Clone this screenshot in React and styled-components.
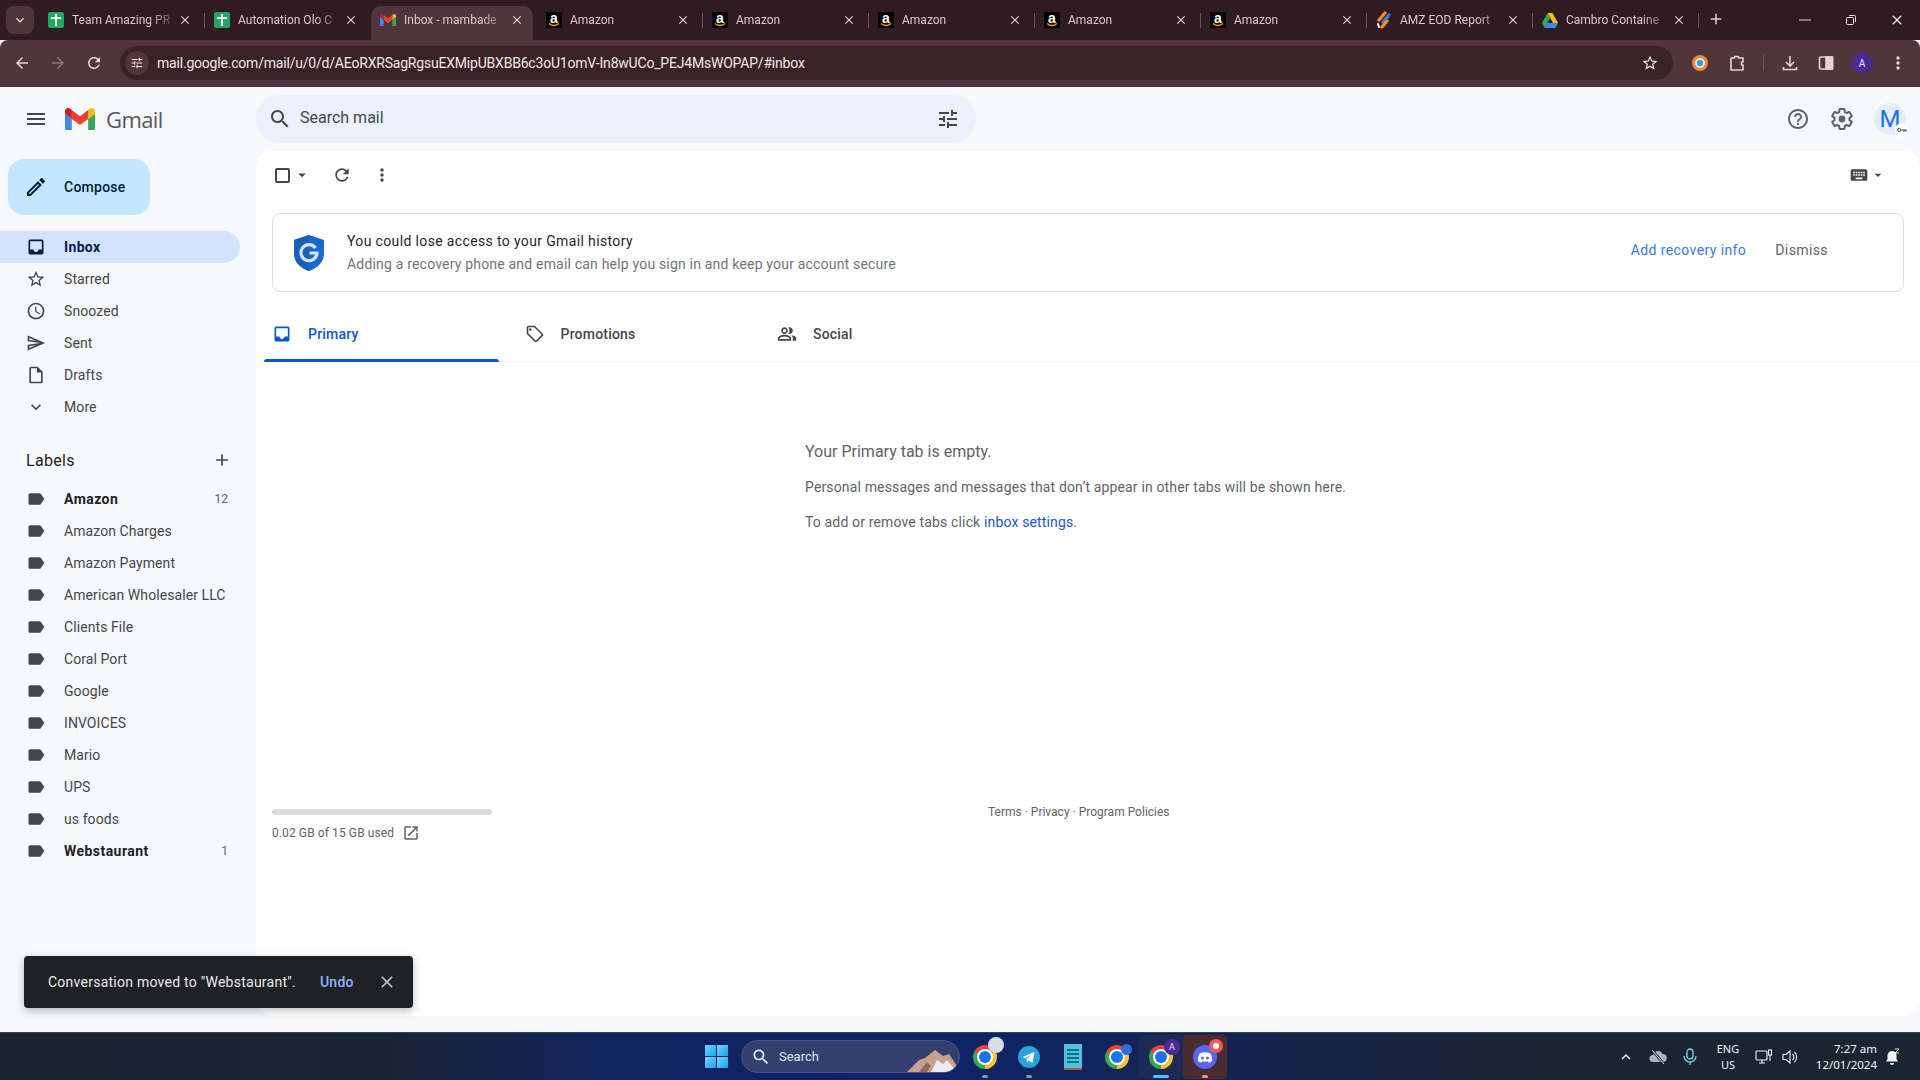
import React from "react";
import styled, { createGlobalStyle } from "styled-components";

const GlobalStyle = createGlobalStyle`
  html, body { margin: 0; padding: 0; }
  body { font-family: Roboto, "Liberation Sans", sans-serif; background: #f6f8fc; }
  * { box-sizing: border-box; }
`;

// material icon paths
const P = {
  menu: "M3 18h18v-2H3v2zm0-5h18v-2H3v2zm0-7v2h18V6H3z",
  search: "M15.5 14h-.79l-.28-.27C15.41 12.59 16 11.11 16 9.5 16 5.91 13.09 3 9.5 3S3 5.91 3 9.5 5.91 16 9.5 16c1.61 0 3.09-.59 4.23-1.57l.27.28v.79l5 4.99L20.49 19l-4.99-5zm-6 0C7.01 14 5 11.99 5 9.5S7.01 5 9.5 5 14 7.01 14 9.5 11.99 14 9.5 14z",
  tune: "M3 17v2h6v-2H3zM3 5v2h10V5H3zm10 16v-2h8v-2h-8v-2h-2v6h2zM7 9v2H3v2h4v2h2V9H7zm14 4v-2H11v2h10zm-6-4h2V7h4V5h-4V3h-2v6z",
  help: "M11 18h2v-2h-2v2zm1-16C6.48 2 2 6.48 2 12s4.48 10 10 10 10-4.48 10-10S17.52 2 12 2zm0 18c-4.41 0-8-3.59-8-8s3.59-8 8-8 8 3.59 8 8-3.59 8-8 8zm0-14c-2.21 0-4 1.79-4 4h2c0-1.1.9-2 2-2s2 .9 2 2c0 2-3 1.75-3 5h2c0-2.25 3-2.5 3-5 0-2.21-1.79-4-4-4z",
  star: "M22 9.24l-7.19-.62L12 2 9.19 8.63 2 9.24l5.46 4.73L5.82 21 12 17.27 18.18 21l-1.63-7.03L22 9.24zM12 15.4l-3.76 2.27 1-4.28-3.32-2.88 4.38-.38L12 6.1l1.71 4.04 4.38.38-3.32 2.88 1 4.28L12 15.4z",
  clock: "M11.99 2C6.47 2 2 6.48 2 12s4.47 10 9.99 10C17.52 22 22 17.52 22 12S17.52 2 11.99 2zM12 20c-4.42 0-8-3.58-8-8s3.58-8 8-8 8 3.58 8 8-3.58 8-8 8zm.5-13H11v6l5.25 3.15.75-1.23-4.5-2.67z",
  send: "M4.01 6.03l7.51 3.22-7.52-1 .01-2.22m7.5 8.72L4 17.97v-2.22l7.51-1M2.01 3L2 10l15 2-15 2 .01 7L23 12 2.01 3z",
  draft: "M14 2H6c-1.1 0-1.99.9-1.99 2L4 20c0 1.1.89 2 1.99 2H18c1.1 0 2-.9 2-2V8l-6-6zM6 20V4h7v5h5v11H6z",
  more: "M16.59 8.59L12 13.17 7.41 8.59 6 10l6 6 6-6z",
  inbox: "M19 3H4.99c-1.11 0-1.98.89-1.98 2L3 19c0 1.1.88 2 1.99 2H19c1.1 0 2-.9 2-2V5c0-1.11-.9-2-2-2zm0 12h-4c0 1.66-1.35 3-3 3s-3-1.34-3-3H4.99V5H19v10z",
  label: "M17.63 5.84C17.27 5.33 16.67 5 16 5L5 5.01C3.9 5.01 3 5.9 3 7v10c0 1.1.9 1.99 2 1.99L16 19c.67 0 1.27-.33 1.63-.84L22 12l-4.37-6.16z",
  add: "M19 13h-6v6h-2v-6H5v-2h6V5h2v6h6v2z",
  refresh: "M17.65 6.35C16.2 4.9 14.21 4 12 4c-4.42 0-7.99 3.58-7.99 8s3.57 8 7.99 8c3.73 0 6.84-2.55 7.73-6h-2.08c-.82 2.33-3.04 4-5.65 4-3.31 0-6-2.69-6-6s2.69-6 6-6c1.66 0 3.14.69 4.22 1.78L13 11h7V4l-2.35 2.35z",
  dots: "M12 8c1.1 0 2-.9 2-2s-.9-2-2-2-2 .9-2 2 .9 2 2 2zm0 2c-1.1 0-2 .9-2 2s.9 2 2 2 2-.9 2-2-.9-2-2-2zm0 6c-1.1 0-2 .9-2 2s.9 2 2 2 2-.9 2-2-.9-2-2-2z",
  arrow: "M7 10l5 5 5-5z",
  tag: "M21.41 11.58l-9-9C12.05 2.22 11.55 2 11 2H4c-1.1 0-2 .9-2 2v7c0 .55.22 1.05.59 1.42l9 9c.36.36.86.58 1.41.58s1.05-.22 1.41-.59l7-7c.37-.36.59-.86.59-1.41s-.23-1.06-.59-1.42zM13 20.01L4 11V4h7v-.01l9 8.99-7 7.03zM6.5 5A1.5 1.5 0 1 0 6.5 8 1.5 1.5 0 1 0 6.5 5z",
  people: "M16.67 13.13C18.04 14.06 19 15.32 19 17v3h4v-3c0-2.18-3.57-3.47-6.33-3.87zM15 12c2.21 0 4-1.79 4-4s-1.79-4-4-4c-.47 0-.91.1-1.33.24C14.5 5.27 15 6.58 15 8s-.5 2.73-1.33 3.76c.42.14.86.24 1.33.24zM9 12c2.21 0 4-1.79 4-4s-1.79-4-4-4-4 1.79-4 4 1.79 4 4 4zm0-6c1.1 0 2 .9 2 2s-.9 2-2 2-2-.9-2-2 .9-2 2-2zm0 7c-2.67 0-8 1.34-8 4v3h16v-3c0-2.66-5.33-4-8-4zm6 5H3v-.99C3.2 16.29 6.3 15 9 15s5.8 1.29 6 2v1z",
  open: "M19 19H5V5h7V3H5c-1.11 0-2 .9-2 2v14c0 1.1.89 2 2 2h14c1.1 0 2-.9 2-2v-7h-2v7zM14 3v2h3.59l-9.83 9.83 1.41 1.41L19 6.41V10h2V3h-7z",
  close: "M19 6.41L17.59 5 12 10.59 6.41 5 5 6.41 10.59 12 5 17.59 6.41 19 12 13.41 17.59 19 19 17.59 13.41 12z",
  edit: "M3 17.25V21h3.75L17.81 9.94l-3.75-3.75L3 17.25zM5.92 19H5v-.92l9.06-9.06.92.92L5.92 19zM20.71 5.63l-2.34-2.34c-.39-.39-1.02-.39-1.41 0l-1.83 1.83 3.75 3.75 1.83-1.83c.39-.39.39-1.02 0-1.41z",
  keyboard: "M20 5H4c-1.1 0-1.99.9-1.99 2L2 17c0 1.1.9 2 2 2h16c1.1 0 2-.9 2-2V7c0-1.1-.9-2-2-2zm-9 3h2v2h-2V8zm0 3h2v2h-2v-2zM8 8h2v2H8V8zm0 3h2v2H8v-2zm-1 2H5v-2h2v2zm0-3H5V8h2v2zm9 7H8v-2h8v2zm0-4h-2v-2h2v2zm0-3h-2V8h2v2zm3 3h-2v-2h2v2zm0-3h-2V8h2v2z",
  back: "M20 11H7.83l5.59-5.59L12 4l-8 8 8 8 1.41-1.41L7.83 13H20v-2z",
  forward: "M12 4l-1.41 1.41L16.17 11H4v2h12.17l-5.58 5.59L12 20l8-8z",
  plain: "M3 11.300h18v1.400H3z",
  gear: "M19.43 12.98c.04-.32.07-.64.07-.98s-.03-.66-.07-.98l2.11-1.65c.19-.15.24-.42.12-.64l-2-3.46c-.12-.22-.39-.3-.61-.22l-2.49 1c-.52-.4-1.08-.73-1.69-.98l-.38-2.65C14.46 2.18 14.25 2 14 2h-4c-.25 0-.46.18-.49.42l-.38 2.65c-.61.25-1.17.59-1.69.98l-2.49-1c-.23-.09-.49 0-.61.22l-2 3.46c-.13.22-.07.49.12.64l2.11 1.65c-.04.32-.07.65-.07.98s.03.66.07.98l-2.11 1.65c-.19.15-.24.42-.12.64l2 3.46c.12.22.39.3.61.22l2.49-1c.52.4 1.08.73 1.69.98l.38 2.65c.03.24.24.42.49.42h4c.25 0 .46-.18.49-.42l.38-2.65c.61-.25 1.17-.59 1.69-.98l2.49 1c.23.09.49 0 .61-.22l2-3.46c.12-.22.07-.49-.12-.64l-2.11-1.65z",
};

const chromeTint = "#e8d0d6";

const Icon = ({ d, size = 20, color = "#444746", className }) => (
  <svg className={className} width={size} height={size} viewBox="0 0 24 24" fill={color} style={{ flex: "none" }}>
    <path d={d} />
  </svg>
);

const Page = styled.div`
  position: relative;
  width: 1920px;
  height: 1080px;
  overflow: hidden;
  display: flex;
  flex-direction: column;
  background: #f6f8fc;
`;

/* ---- browser chrome ---- */
const TabStrip = styled.div`
  height: 40px;
  background: #2f1b21;
  display: flex;
  align-items: flex-end;
  padding-left: 6px;
  color: #dcc8ce;
`;
const TabSearch = styled.div`
  width: 28px;
  height: 28px;
  margin: 0 5px 6px 0;
  border-radius: 8px;
  background: #50363c;
  display: flex;
  align-items: center;
  justify-content: center;
`;
const Tab = styled.div`
  position: relative;
  width: ${(p) => (p.$active ? "162px" : "166px")};
  margin-right: ${(p) => (p.$active ? "4px" : "0")};
  height: 34px;
  padding: 0 ${(p) => (p.$active ? "9px" : "13px")} 6px 9px;
  display: flex;
  align-items: center;
  gap: 8px;
  border-radius: 10px 10px 0 0;
  background: ${(p) => (p.$active ? "#50363c" : "transparent")};
  font-size: 12px;
  &::after {
    content: "";
    display: ${(p) => (p.$sep ? "block" : "none")};
    position: absolute;
    right: 0;
    top: 7px;
    height: 15px;
    width: 1px;
    background: #6a535a;
  }
`;
const TabTitle = styled.span`
  flex: 1;
  white-space: nowrap;
  overflow: hidden;
  -webkit-mask-image: linear-gradient(90deg, #000 78%, rgba(0, 0, 0, 0.35) 100%);
  mask-image: linear-gradient(90deg, #000 78%, rgba(0, 0, 0, 0.35) 100%);
`;
const Favicon = styled.span`
  flex: none;
  width: 16px;
  height: 16px;
  display: flex;
  align-items: center;
  justify-content: center;
`;
const SheetIcon = styled(Favicon)`
  background: #23a566;
  border-radius: 2px;
  &::before {
    content: "";
    width: 10px;
    height: 12px;
    background:
      linear-gradient(#fff, #fff) 0 3px / 10px 2px no-repeat,
      linear-gradient(#fff, #fff) 4px 0 / 2px 12px no-repeat;
  }
`;
const AmazonIcon = styled(Favicon)`
  position: relative;
  background: #000;
  color: #fff;
  font: 700 14px/12px "Liberation Sans", sans-serif;
  align-items: flex-start;
  svg { position: absolute; left: 2px; bottom: 1px; }
`;
const NewTab = styled.div`
  margin: 0 0 12px 8px;
  display: flex;
`;
const WindowControls = styled.div`
  margin-left: auto;
  display: flex;
  margin-bottom: 12px;
  padding-right: 15px;
  gap: 30px;
`;
const Toolbar = styled.div`
  height: 47px;
  background: #50363c;
  border-radius: 8px 8px 0 0;
  padding: 6px 4px 7px 12px;
  display: flex;
  align-items: center;
`;
const NavButton = styled.div`
  width: 36px;
  display: flex;
  justify-content: center;
  align-items: center;
  &:first-child { margin-left: -8px; }
`;
const AddressBar = styled.div`
  width: 1553px;
  height: 34px;
  margin-left: 8px;
  border-radius: 17px;
  background: #3a2227;
  display: flex;
  align-items: center;
  padding: 0 14px 0 5px;
  color: #f2e6e8;
  font-size: 14px;
  letter-spacing: -0.2px;
`;
const SiteInfo = styled.div`
  width: 24px;
  height: 24px;
  border-radius: 50%;
  background: #50363c;
  display: flex;
  align-items: center;
  justify-content: center;
  margin-right: 8px;
`;
const Url = styled.span`
  flex: 1;
  white-space: nowrap;
`;
const ToolSlot = styled.div`
  width: ${(p) => p.$w || 36}px;
  display: flex;
  justify-content: center;
  align-items: center;
  position: relative;
`;
const ToolDivider = styled.span`
  width: 1px;
  height: 16px;
  background: #6a535a;
  margin: 0 8px 0 16px;
`;
const ProfileDot = styled.span`
  width: 20px;
  height: 20px;
  border-radius: 50%;
  background: #4b2a9a;
  color: #f0e8ff;
  font-size: 10px;
  display: flex;
  align-items: center;
  justify-content: center;
`;
const ExtIcon = styled.span`
  width: 16px;
  height: 16px;
  border-radius: 50%;
  background: radial-gradient(circle, #27a7e7 0 3px, #f6e2cf 3.5px 4.5px, #e8873a 5.5px);
`;

/* ---- gmail ---- */
const MailHeader = styled.header`
  height: 64px;
  display: flex;
  align-items: center;
`;
const Brand = styled.div`
  width: 256px;
  display: flex;
  align-items: center;
  padding-left: 24px;
`;
const BrandGap = styled.span`
  width: 17px;
`;
const BrandName = styled.span`
  margin-left: 11px;
  font: 400 22px/1 "Open Sans", Roboto, sans-serif;
  letter-spacing: -0.6px;
  color: #55585c;
`;
const SearchBox = styled.div`
  width: 720px;
  height: 48px;
  border-radius: 24px;
  background: #eaf1fb;
  display: flex;
  align-items: center;
  padding: 0 16px 0 12px;
  color: #444746;
  font-size: 16px;
`;
const SearchText = styled.span`
  flex: 1;
  margin: -3px 0 0 8px;
`;
const HeaderActions = styled.div`
  margin-left: auto;
  display: flex;
  align-items: center;
  padding-right: 14px;
`;
const HeaderButton = styled.div`
  width: 44px;
  display: flex;
  justify-content: center;
`;
const Avatar = styled.div`
  position: relative;
  width: 32px;
  height: 32px;
  margin-left: 10px;
  border-radius: 50%;
  background: #e3edfb;
  color: #1a73e8;
  font-size: 24px;
  display: flex;
  align-items: center;
  justify-content: center;
`;
const KeyBadge = styled.span`
  position: absolute;
  right: -3px;
  bottom: -2px;
  width: 14px;
  height: 14px;
  border-radius: 50%;
  background: #fff;
  display: flex;
  align-items: center;
  justify-content: center;
`;
const MailBody = styled.div`
  flex: 1;
  display: flex;
  min-height: 0;
`;
const Sidebar = styled.aside`
  width: 256px;
  flex: none;
`;
const Compose = styled.div`
  width: 142px;
  height: 56px;
  margin: 8px 0 16px 8px;
  padding-left: 16px;
  border-radius: 16px;
  background: #c2e7ff;
  display: flex;
  align-items: center;
  gap: 16px;
  font-size: 14px;
  font-weight: 500;
  letter-spacing: 0.25px;
  color: #001d35;
`;
const NavRow = styled.div`
  width: 240px;
  height: 32px;
  padding: 0 0 0 26px;
  border-radius: 0 16px 16px 0;
  display: flex;
  align-items: center;
  gap: 18px;
  font-size: 14px;
  letter-spacing: ${(p) => (p.$active ? "0.35px" : "0.1px")};
  background: ${(p) => (p.$active ? "#d3e3fd" : "transparent")};
  color: ${(p) => (p.$active ? "#041e49" : "#444746")};
  font-weight: ${(p) => (p.$active ? 700 : 400)};
`;
const LabelsHead = styled.div`
  height: 60px;
  padding: 14px 24px 0 26px;
  display: flex;
  align-items: center;
  justify-content: space-between;
  font-size: 16px;
  font-weight: 400;
  letter-spacing: 0.3px;
  color: #1f1f1f;
`;
const LabelRow = styled(NavRow)`
  padding-right: 12px;
  letter-spacing: ${(p) => (p.$bold ? "0.45px" : "0.08px")};
  color: ${(p) => (p.$bold ? "#202124" : "#444746")};
  font-weight: ${(p) => (p.$bold ? 700 : 400)};
`;
const LabelCount = styled.span`
  margin-left: auto;
  font-size: 12px;
  font-weight: 400;
  letter-spacing: 0;
  color: #5f6368;
`;
const Panel = styled.main`
  flex: 1;
  margin-bottom: 16px;
  border-radius: 16px;
  background: #fff;
  display: flex;
  flex-direction: column;
`;
const ListBar = styled.div`
  height: 48px;
  padding: 0 34px 0 19px;
  display: flex;
  align-items: center;
`;
const Checkbox = styled.span`
  width: 15px;
  height: 15px;
  border: 2px solid #444746;
  border-radius: 2px;
`;
const BarIcon = styled.span`
  display: flex;
  margin-left: ${(p) => p.$gap || 0}px;
`;
const InputTools = styled.div`
  margin-left: auto;
  display: flex;
  align-items: center;
  gap: 1px;
`;
const Notice = styled.div`
  height: 79px;
  margin: 14px 16px 0;
  border: 1px solid #dadce0;
  border-radius: 8px;
  padding: 0 75px 0 21px;
  display: flex;
  align-items: center;
  font-size: 14px;
`;
const NoticeText = styled.div`
  margin-left: 23px;
  line-height: 23px;
`;
const NoticeTitle = styled.div`
  color: #1f1f1f;
  font-weight: 400;
  letter-spacing: 0.36px;
`;
const NoticeSub = styled.div`
  color: #70757a;
  letter-spacing: 0.19px;
`;
const NoticeActions = styled.div`
  margin-left: auto;
  margin-top: -5px;
  display: flex;
  gap: 29px;
  letter-spacing: 0.4px;
`;
const RecoveryLink = styled.span`
  color: #3b78e7;
`;
const Dismiss = styled.span`
  color: #5f6368;
`;
const TabsRow = styled.div`
  height: 56px;
  margin-top: 14px;
  padding-left: 8px;
  border-bottom: 1px solid #f1f3f4;
  display: flex;
`;
const MailTab = styled.div`
  position: relative;
  width: 252.5px;
  padding-left: 8px;
  display: flex;
  align-items: center;
  gap: 16px;
  font-size: 14px;
  font-weight: 500;
  letter-spacing: 0.2px;
  color: ${(p) => (p.$active ? "#0b57d0" : "#444746")};
  &::after {
    content: "";
    display: ${(p) => (p.$active ? "block" : "none")};
    position: absolute;
    left: 0;
    bottom: -1px;
    width: 235px;
    height: 3px;
    border-radius: 3px 3px 0 0;
    background: #0b57d0;
  }
`;
const Empty = styled.section`
  padding: 78px 0 0 549px;
  color: #5f6368;
  font-size: 14px;
`;
const EmptyTitle = styled.div`
  font-size: 16px;
  line-height: 24px;
  margin-bottom: 11px;
`;
const EmptyLine = styled.div`
  line-height: 24px;
  margin-bottom: 11px;
  letter-spacing: 0.15px;
`;
const EmptyLink = styled.span`
  color: #1a56c4;
`;
const MailFooter = styled.footer`
  margin-top: 264px;
  padding-left: 16px;
  display: flex;
  font-size: 12px;
  color: #5f6368;
`;
const Storage = styled.div`
  width: 220px;
`;
const StorageBar = styled.div`
  height: 6px;
  border-radius: 3px;
  background: #dadce0;
`;
const StorageText = styled.div`
  margin-top: 9px;
  display: flex;
  align-items: center;
  gap: 8px;
  letter-spacing: 0.1px;
`;
const Terms = styled.div`
  margin-left: 496px;
  margin-top: -4px;
  line-height: 14px;
`;
const Toast = styled.div`
  position: absolute;
  left: 24px;
  bottom: 72px;
  width: 389px;
  height: 52px;
  padding: 0 16px 0 24px;
  border-radius: 4px;
  background: #202124;
  box-shadow: 0 3px 8px rgba(60, 64, 67, 0.35);
  color: #e8eaed;
  font-size: 14px;
  letter-spacing: 0.25px;
  display: flex;
  align-items: center;
`;
const ToastUndo = styled.span`
  margin-left: 24px;
  color: #8ab4f8;
  font-weight: 500;
`;
const ToastClose = styled.span`
  margin-left: auto;
  display: flex;
`;

/* ---- taskbar ---- */
const Taskbar = styled.div`
  height: 48px;
  border-top: 1px solid #3d434f;
  background: linear-gradient(90deg, #1b2330 0%, #1a2335 20%, #10235e 32%, #0f2468 50%, #14234d 66%, #1b2431 80%, #1b2431 100%);
  display: flex;
  align-items: center;
  padding-left: 705px;
  color: #f2f4f7;
`;
const WinLogo = styled.div`
  width: 23px;
  height: 23px;
  display: grid;
  grid-template-columns: 1fr 1fr;
  gap: 1px;
  span { background: linear-gradient(135deg, #6fd7fb, #1aa2ea); }
`;
const TaskSearch = styled.div`
  position: relative;
  width: 219px;
  height: 33px;
  margin-left: 13px;
  border-radius: 17px;
  border: 1px solid #4a5684;
  background: #33406f;
  display: flex;
  align-items: center;
  padding-left: 9px;
  gap: 8px;
  font-size: 13px;
  color: #dfe3ee;
  overflow: hidden;
  svg.peaks { position: absolute; right: 2px; bottom: 0; }
`;
const TaskSlot = styled.div`
  position: relative;
  width: 44px;
  height: 44px;
  margin-left: ${(p) => (p.$first ? "3px" : "0")};
  display: flex;
  align-items: center;
  justify-content: center;
  border-radius: 4px;
  background: ${(p) => p.$bg || "transparent"};
  &::after {
    content: "";
    display: ${(p) => (p.$mark ? "block" : "none")};
    position: absolute;
    left: 50%;
    bottom: 1px;
    transform: translateX(-50%);
    width: ${(p) => (p.$wide ? "16px" : "6px")};
    height: 3px;
    border-radius: 2px;
    background: ${(p) => p.$mark};
  }
`;
const ChromeIcon = styled.span`
  position: relative;
  width: 24px;
  height: 24px;
  border-radius: 50%;
  background: conic-gradient(from -62deg, #ea4335 0 124deg, #fbc02d 124deg 240deg, #34a853 240deg 360deg);
  &::after {
    content: "";
    position: absolute;
    inset: 6px;
    border-radius: 50%;
    background: #1a73e8;
    box-shadow: 0 0 0 2px #fff;
  }
`;
const AppBadge = styled.span`
  position: absolute;
  top: ${(p) => p.$top ?? 2}px;
  right: ${(p) => p.$right ?? 6}px;
  width: ${(p) => p.$size || 15}px;
  height: ${(p) => p.$size || 15}px;
  border-radius: 50%;
  background: ${(p) => p.$bg};
  color: #e8e0ff;
  font-size: 9px;
  display: flex;
  align-items: center;
  justify-content: center;
`;
const Tray = styled.div`
  margin-left: auto;
  height: 100%;
  padding-right: 13px;
  display: flex;
  align-items: center;
`;
const TraySlot = styled.div`
  width: ${(p) => p.$w}px;
  display: flex;
  justify-content: center;
  align-items: center;
`;
const TrayText = styled.div`
  width: ${(p) => p.$w}px;
  text-align: ${(p) => p.$align || "center"};
  font-family: "Noto Sans", "Open Sans", sans-serif;
  font-size: ${(p) => p.$size || 11}px;
  line-height: 16px;
  white-space: nowrap;
`;

const Sheet = () => <SheetIcon />;
const Amazon = () => (
  <AmazonIcon>
    a
    <svg width="12" height="4" viewBox="0 0 12 4"><path d="M1 0.5c3 2.5 7 2.5 10 0" stroke="#f90" strokeWidth="1.4" fill="none" /></svg>
  </AmazonIcon>
);
const GmailMark = ({ w = 16, h = 12 }) => (
  <svg width={w} height={h} viewBox="52 42 88 66" style={{ flex: "none" }}>
    <path fill="#4285f4" d="M58 108h14V74L52 59v43c0 3.32 2.69 6 6 6" />
    <path fill="#34a853" d="M120 108h14c3.32 0 6-2.69 6-6V59l-20 15" />
    <path fill="#fbbc04" d="M120 48v26l20-15v-8c0-7.42-8.47-11.65-14.4-7.2" />
    <path fill="#ea4335" d="M72 74V48l24 18 24-18v26L96 92" />
    <path fill="#c5221f" d="M52 51v8l20 15V48l-5.6-4.2c-5.94-4.45-14.4-.22-14.4 7.2" />
  </svg>
);
const Amz = () => (
  <svg width="16" height="18" viewBox="0 0 16 18" style={{ flex: "none" }}>
    <path d="M9 2L3 9" stroke="#f28b20" strokeWidth="3.4" strokeLinecap="round" />
    <path d="M13 4L7 11" stroke="#2a7de1" strokeWidth="3.4" strokeLinecap="round" />
    <path d="M11 10L6 16" stroke="#f28b20" strokeWidth="3.4" strokeLinecap="round" />
    <path d="M2 13L3 16" stroke="#fff" strokeWidth="2" strokeLinecap="round" />
  </svg>
);
const Drive = () => (
  <svg width="16" height="15" viewBox="0 0 16 15" style={{ flex: "none" }}>
    <path d="M5.5 0h5L16 10h-5z" fill="#fbbc04" />
    <path d="M5.5 0L0 10l2.5 5L8 5z" fill="#34a853" />
    <path d="M2.5 15h11l2.5-5H5z" fill="#4285f4" />
  </svg>
);

const tabs = [
  { title: "Team Amazing PR", icon: <Sheet />, sep: true },
  { title: "Automation Olo C", icon: <Sheet /> },
  { title: "Inbox - mambade", icon: <GmailMark />, active: true },
  { title: "Amazon", icon: <Amazon />, sep: true },
  { title: "Amazon", icon: <Amazon />, sep: true },
  { title: "Amazon", icon: <Amazon />, sep: true },
  { title: "Amazon", icon: <Amazon />, sep: true },
  { title: "Amazon", icon: <Amazon />, sep: true },
  { title: "AMZ EOD Report", icon: <Amz />, sep: true },
  { title: "Cambro Containe", icon: <Drive />, sep: true },
];

const mainNav = [
  { text: "Inbox", d: P.inbox, active: true },
  { text: "Starred", d: P.star },
  { text: "Snoozed", d: P.clock },
  { text: "Sent", d: P.send },
  { text: "Drafts", d: P.draft },
  { text: "More", d: P.more },
];

const labels = [
  { text: "Amazon", count: 12, bold: true },
  { text: "Amazon Charges" },
  { text: "Amazon Payment" },
  { text: "American Wholesaler LLC" },
  { text: "Clients File" },
  { text: "Coral Port" },
  { text: "Google" },
  { text: "INVOICES" },
  { text: "Mario" },
  { text: "UPS" },
  { text: "us foods" },
  { text: "Webstaurant", count: 1, bold: true },
];

const BrowserChrome = () => (
  <>
    <TabStrip>
      <TabSearch><Icon d={P.more} size={16} color={chromeTint} /></TabSearch>
      {tabs.map((t, i) => (
        <Tab key={i} $active={t.active} $sep={t.sep}>
          {t.icon}
          <TabTitle>{t.title}</TabTitle>
          <Icon d={P.close} size={14} color={chromeTint} />
        </Tab>
      ))}
      <NewTab><Icon d={P.add} size={18} color={chromeTint} /></NewTab>
      <WindowControls>
        <Icon d={P.plain} size={16} color="#f0e4e6" />
        <svg width="16" height="16" viewBox="0 0 16 16" fill="none" stroke="#f0e4e6" strokeWidth="1">
          <rect x="3.5" y="5.5" width="7" height="7" rx="1" />
          <path d="M6 3.5h5.5a1 1 0 0 1 1 1V10" />
        </svg>
        <Icon d={P.close} size={16} color="#f0e4e6" />
      </WindowControls>
    </TabStrip>
    <Toolbar>
      <NavButton><Icon d={P.back} size={18} color={chromeTint} /></NavButton>
      <NavButton><Icon d={P.forward} size={18} color="#8a747a" /></NavButton>
      <NavButton><Icon d={P.refresh} size={18} color={chromeTint} /></NavButton>
      <AddressBar>
        <SiteInfo><Icon d={P.tune} size={14} color="#f2e6e8" /></SiteInfo>
        <Url>mail.google.com/mail/u/0/d/AEoRXRSagRgsuEXMipUBXBB6c3oU1omV-In8wUCo_PEJ4MsWOPAP/#inbox</Url>
        <Icon d={P.star} size={18} color="#f2e6e8" />
      </AddressBar>
      <ToolSlot $w={54}><ExtIcon /></ToolSlot>
      <ToolSlot $w={20}>
        <svg width="18" height="18" viewBox="0 0 18 18" fill="none" stroke={chromeTint} strokeWidth="1.6">
          <path d="M3 4h3.500V2.500h4V4H15v4h-1.500v3H15v5H3z" strokeLinejoin="round" />
        </svg>
      </ToolSlot>
      <ToolDivider />
      <ToolSlot $w={36}>
        <svg width="18" height="18" viewBox="0 0 18 18" fill="none" stroke={chromeTint} strokeWidth="1.6">
          <path d="M9 2v10M5 8l4 4 4-4M2.500 13v2.500h13V13" />
        </svg>
      </ToolSlot>
      <ToolSlot $w={36}>
        <svg width="18" height="18" viewBox="0 0 18 18" fill="none" stroke={chromeTint} strokeWidth="1.6">
          <rect x="2.500" y="3" width="13" height="12" rx="1" />
          <rect x="9" y="3" width="6.500" height="12" fill={chromeTint} />
        </svg>
      </ToolSlot>
      <ToolSlot $w={36}><ProfileDot>A</ProfileDot></ToolSlot>
      <ToolSlot $w={36}><Icon d={P.dots} size={20} color={chromeTint} /></ToolSlot>
    </Toolbar>
  </>
);

const Header = () => (
  <MailHeader>
    <Brand>
      <Icon d={P.menu} size={24} color="#444746" />
      <BrandGap />
      <GmailMark w={30} h={22.5} />
      <BrandName>Gmail</BrandName>
    </Brand>
    <SearchBox>
      <Icon d={P.search} size={24} color="#444746" />
      <SearchText>Search mail</SearchText>
      <Icon d={P.tune} size={24} color="#444746" />
    </SearchBox>
    <HeaderActions>
      <HeaderButton><Icon d={P.help} size={24} color="#5f6368" /></HeaderButton>
      <HeaderButton>
        <svg width="24" height="24" viewBox="0 0 24 24">
          <path d={P.gear} fill="none" stroke="#5f6368" strokeWidth="2" />
          <circle cx="12" cy="12" r="3.4" fill="#5f6368" />
        </svg>
      </HeaderButton>
      <Avatar>
        M
        <KeyBadge>
          <svg width="10" height="6" viewBox="0 0 10 6" fill="none" stroke="#444" strokeWidth="1">
            <circle cx="2.2" cy="3" r="1.6" />
            <path d="M4 3h5.5M7 3v2M9 3v1.6" />
          </svg>
        </KeyBadge>
      </Avatar>
    </HeaderActions>
  </MailHeader>
);

const Side = () => (
  <Sidebar>
    <Compose>
      <Icon d={P.edit} size={24} color="#001d35" />
      Compose
    </Compose>
    {mainNav.map((n) => (
      <NavRow key={n.text} $active={n.active}>
        <Icon d={n.d} size={20} color={n.active ? "#041e49" : "#444746"} />
        {n.text}
      </NavRow>
    ))}
    <LabelsHead>
      Labels
      <Icon d={P.add} size={20} color="#444746" />
    </LabelsHead>
    {labels.map((l) => (
      <LabelRow key={l.text} $bold={l.bold}>
        <Icon d={P.label} size={20} color="#444746" />
        {l.text}
        {l.count && <LabelCount>{l.count}</LabelCount>}
      </LabelRow>
    ))}
  </Sidebar>
);

const Shield = () => (
  <svg width="30" height="36" viewBox="0 0 30 36" style={{ flex: "none" }}>
    <path d="M15 0l15 5v13c0 8.5-6 15-15 18C6 33 0 26.500 0 18V5z" fill="#1967d2" />
    <path d="M15 0L0 5v13c0 8.500 6 15 15 18z" fill="#1a5fb8" />
    <path d="M21.500 13a8 8 0 1 0 1.500 5h-7.500" fill="none" stroke="#d2e3fc" strokeWidth="3.200" />
  </svg>
);

const Content = () => (
  <Panel>
    <ListBar>
      <Checkbox />
      <BarIcon $gap={3}><Icon d={P.arrow} size={18} color="#444746" /></BarIcon>
      <BarIcon $gap={21}><Icon d={P.refresh} size={20} color="#444746" /></BarIcon>
      <BarIcon $gap={20}><Icon d={P.dots} size={20} color="#444746" /></BarIcon>
      <InputTools>
        <Icon d={P.keyboard} size={20} color="#444746" />
        <Icon d={P.arrow} size={16} color="#444746" />
      </InputTools>
    </ListBar>
    <Notice>
      <Shield />
      <NoticeText>
        <NoticeTitle>You could lose access to your Gmail history</NoticeTitle>
        <NoticeSub>Adding a recovery phone and email can help you sign in and keep your account secure</NoticeSub>
      </NoticeText>
      <NoticeActions>
        <RecoveryLink>Add recovery info</RecoveryLink>
        <Dismiss>Dismiss</Dismiss>
      </NoticeActions>
    </Notice>
    <TabsRow>
      <MailTab $active>
        <Icon d={P.inbox} size={20} color="#0b57d0" />
        Primary
      </MailTab>
      <MailTab>
        <Icon d={P.tag} size={20} color="#444746" />
        Promotions
      </MailTab>
      <MailTab>
        <Icon d={P.people} size={20} color="#444746" />
        Social
      </MailTab>
    </TabsRow>
    <Empty>
      <EmptyTitle>Your Primary tab is empty.</EmptyTitle>
      <EmptyLine>Personal messages and messages that don’t appear in other tabs will be shown here.</EmptyLine>
      <EmptyLine>To add or remove tabs click <EmptyLink>inbox settings</EmptyLink>.</EmptyLine>
    </Empty>
    <MailFooter>
      <Storage>
        <StorageBar />
        <StorageText>
          0.02 GB of 15 GB used
          <Icon d={P.open} size={18} color="#5f6368" />
        </StorageText>
      </Storage>
      <Terms>Terms · Privacy · Program Policies</Terms>
    </MailFooter>
  </Panel>
);

const WindowsTaskbar = () => (
  <Taskbar>
    <WinLogo><span /><span /><span /><span /></WinLogo>
    <TaskSearch>
      <Icon d={P.search} size={20} color="#e6e9f2" />
      Search
      <svg className="peaks" width="50" height="24" viewBox="0 0 50 24">
        <path d="M0 24L12 12l6-2L28 2l8 6 6-2 8 12v6z" fill="#c9a090" />
        <path d="M24 24l6-12 6 4 4-4 10 12z" fill="#e8ecf4" />
        <path d="M12 24l8-10 4 4-4 6z" fill="#8d6a60" />
      </svg>
    </TaskSearch>
    <TaskSlot $first $mark="#8c93a3">
      <ChromeIcon />
      <AppBadge $bg="#d8dde4" $top={2} $right={3} $size={16} />
    </TaskSlot>
    <TaskSlot $mark="#8c93a3">
      <svg width="22" height="22" viewBox="0 0 22 22">
        <circle cx="11" cy="11" r="11" fill="#2aa3dc" />
        <path d="M4.500 11l12-5-2 11-3.500-2.500-2 2-.5-3.500 5-4.500-6.500 4z" fill="#fff" />
      </svg>
    </TaskSlot>
    <TaskSlot>
      <svg width="18" height="26" viewBox="0 0 18 26">
        <rect width="18" height="26" fill="#4fc3d9" />
        <rect y="24" width="18" height="2" fill="#a5622f" />
        <path d="M3 6h12M3 10h12M3 14h12M3 18h12" stroke="#0b6d8c" strokeWidth="1.800" />
      </svg>
    </TaskSlot>
    <TaskSlot>
      <ChromeIcon />
      <AppBadge $bg="#2f6fdc" $top={9} $right={7} $size={11} />
    </TaskSlot>
    <TaskSlot $bg="#1d2a56" $mark="#4cc2ff" $wide>
      <ChromeIcon />
      <AppBadge $bg="#4b2a9a" $top={4} $right={3} $size={16}>A</AppBadge>
    </TaskSlot>
    <TaskSlot $bg="#4a2b2e" $mark="#ff8a8a">
      <svg width="24" height="24" viewBox="0 0 24 24">
        <circle cx="12" cy="12" r="12" fill="#5865f2" />
        <path d="M6.500 8.500c3.500-1.700 7.500-1.700 11 0 1.300 2.500 1.800 5 1.600 7.500-1.200 1-2.400 1.500-3.500 1.700l-.9-1.500c-1.800.6-3.600.6-5.400 0l-.9 1.500c-1.100-.2-2.300-.7-3.500-1.700-.2-2.500.3-5 1.600-7.500z" fill="#fff" />
        <circle cx="9.500" cy="13" r="1.500" fill="#5865f2" />
        <circle cx="14.500" cy="13" r="1.500" fill="#5865f2" />
      </svg>
      <AppBadge $bg="#f05a5a" $top={4} $right={4} $size={14}>
        <svg width="6" height="6" viewBox="0 0 6 6"><circle cx="3" cy="3" r="3" fill="#fff" /></svg>
      </AppBadge>
    </TaskSlot>
    <Tray>
      <TraySlot $w={32}><Icon d="M12 8l-6 6 1.410 1.410L12 10.830l4.590 4.580L18 14z" size={18} color="#f2f4f7" /></TraySlot>
      <TraySlot $w={32}>
        <svg width="18" height="16" viewBox="0 0 18 16">
          <path d="M4 13a3.500 3.500 0 0 1 0-7 5 5 0 0 1 9.500-1A4 4 0 0 1 14 13z" fill="#aeb3ba" />
          <path d="M3 1l12 14" stroke="#1b2431" strokeWidth="2.500" />
          <path d="M3 1l12 14" stroke="#e8eaed" strokeWidth="1" />
        </svg>
      </TraySlot>
      <TraySlot $w={32}>
        <svg width="14" height="18" viewBox="0 0 14 18" fill="none" stroke="#6fd3ec" strokeWidth="1.300">
          <rect x="4" y="1" width="6" height="10" rx="3" />
          <path d="M1 8a6 6 0 0 0 12 0M7 14v3" />
        </svg>
      </TraySlot>
      <TrayText $w={44}>ENG<br />US</TrayText>
      <TraySlot $w={27}>
        <svg width="18" height="18" viewBox="0 0 18 18" fill="none" stroke="#f2f4f7" strokeWidth="1.100">
          <rect x="1" y="3" width="11" height="9" rx="1" />
          <path d="M4 15h6M7 12v3" />
          <rect x="13.500" y="2" width="3" height="5" />
          <path d="M15 7v6" />
        </svg>
      </TraySlot>
      <TraySlot $w={26}>
        <svg width="18" height="16" viewBox="0 0 18 16" fill="none" stroke="#f2f4f7" strokeWidth="1.100">
          <path d="M2 5.500h3L9 2v12L5 10.500H2zM11.500 5a4 4 0 0 1 0 6M13.500 3a7 7 0 0 1 0 10" />
        </svg>
      </TraySlot>
      <TrayText $w={74} $align="right" $size={11.5}>7:27 am<br />12/01/2024</TrayText>
      <TraySlot $w={30}>
        <svg width="16" height="18" viewBox="0 0 16 18">
          <path d="M8 3a4.500 4.500 0 0 0-4.500 4.500V11L2 13.500h12L12.500 11V7.500A4.500 4.500 0 0 0 8 3zM6 15h4a2 2 0 0 1-4 0z" fill="#f2f4f7" />
          <path d="M11 1h4l-4 4h4" stroke="#f2f4f7" strokeWidth="1" fill="none" />
        </svg>
      </TraySlot>
    </Tray>
  </Taskbar>
);

const App = () => (
  <Page>
    <GlobalStyle />
    <BrowserChrome />
    <Header />
    <MailBody>
      <Side />
      <Content />
    </MailBody>
    <WindowsTaskbar />
    <Toast>
      Conversation moved to "Webstaurant".
      <ToastUndo>Undo</ToastUndo>
      <ToastClose><Icon d={P.close} size={20} color="#bdc1c6" /></ToastClose>
    </Toast>
  </Page>
);

export default App;
